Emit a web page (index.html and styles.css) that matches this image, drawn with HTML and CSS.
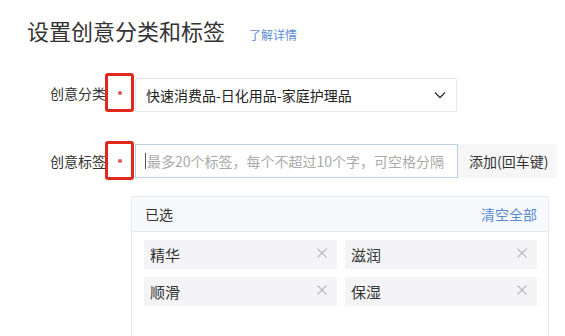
FILE: index.html
```html
<!DOCTYPE html>
<html lang="zh">
<head>
<meta charset="utf-8">
<link rel="stylesheet" href="styles.css">
</head>
<body>
<div class="page">
  <div class="title-row">
    <h1 class="title">设置创意分类和标签</h1>
    <a class="link">了解详情</a>
  </div>
  <div class="form">
    <div class="row row-cat">
      <div class="label">创意分类</div>
      <div class="star"><span class="dot"></span></div>
      <div class="select">
        <span class="select-text">快速消费品-日化用品-家庭护理品</span>
        <svg class="chev" width="12" height="8" viewBox="0 0 12 8"><path d="M1 1.5 L6 6.5 L11 1.5" fill="none" stroke="#333" stroke-width="1.3"/></svg>
      </div>
    </div>
    <div class="row row-tag">
      <div class="label">创意标签</div>
      <div class="star"><span class="dot"></span></div>
      <div class="input"><span class="caret"></span><span class="ph">最多20个标签，每个不超过10个字，可空格分隔</span></div>
      <div class="btn">添加(回车键)</div>
    </div>
    <div class="chosen">
      <div class="chosen-head">
        <span>已选</span>
        <a class="link clear">清空全部</a>
      </div>
      <div class="tags">
        <div class="tag"><span>精华</span><svg class="x" width="10" height="10" viewBox="0 0 10 10"><path d="M0.5 0.5 L9.5 9.5 M9.5 0.5 L0.5 9.5" stroke="#b8b8b8" stroke-width="1.1"/></svg></div>
        <div class="tag"><span>滋润</span><svg class="x" width="10" height="10" viewBox="0 0 10 10"><path d="M0.5 0.5 L9.5 9.5 M9.5 0.5 L0.5 9.5" stroke="#b8b8b8" stroke-width="1.1"/></svg></div>
        <div class="tag"><span>顺滑</span><svg class="x" width="10" height="10" viewBox="0 0 10 10"><path d="M0.5 0.5 L9.5 9.5 M9.5 0.5 L0.5 9.5" stroke="#b8b8b8" stroke-width="1.1"/></svg></div>
        <div class="tag"><span>保湿</span><svg class="x" width="10" height="10" viewBox="0 0 10 10"><path d="M0.5 0.5 L9.5 9.5 M9.5 0.5 L0.5 9.5" stroke="#b8b8b8" stroke-width="1.1"/></svg></div>
      </div>
    </div>
  </div>
</div>
</body>
</html>
```
FILE: styles.css
```css
* { box-sizing: border-box; }
html, body { margin: 0; padding: 0; background: #fff; }
body {
  width: 565px;
  height: 336px;
  overflow: hidden;
  font-family: "Noto Sans CJK SC", "Noto Sans", sans-serif;
  color: #333;
}
.page { padding-left: 27px; }
.title-row {
  display: flex;
  align-items: baseline;
  padding-top: 14px;
  height: 48px;
}
.title {
  margin: 0;
  font-size: 22px;
  font-weight: normal;
  line-height: 32px;
  color: #333;
}
.link {
  color: #5b8bd3;
  font-size: 12px;
  margin-left: 24px;
  cursor: pointer;
}
.form { padding-left: 23px; }
.row {
  display: flex;
  align-items: center;
  font-size: 14px;
}
.row-cat { margin-top: 25px; }
.row-tag { margin-top: 29px; }
.label {
  width: 57px;
  color: #333;
  line-height: 20px;
}
.star {
  width: 29px;
  height: 39px;
  margin-left: -2px;
  border: 3px solid #e0281c;
  border-radius: 3px;
  display: flex;
  align-items: center;
  justify-content: center;
}
.dot {
  width: 4px;
  height: 4px;
  border-radius: 50%;
  background: #e05555;
}
.select {
  margin-left: 1px;
  width: 322px;
  height: 34px;
  border: 1px solid #e4e7ec;
  border-radius: 2px;
  display: flex;
  align-items: center;
  justify-content: space-between;
  padding: 0 10px 0 10px;
  margin-top: 5px;
}
.select-text { color: #222; }
.input {
  margin-left: 1px;
  width: 323px;
  height: 34px;
  border: 1px solid #b7cfe6;
  display: flex;
  align-items: center;
  padding-left: 9px;
}
.caret {
  width: 1px;
  height: 16px;
  background: #555;
  margin-right: 1px;
}
.ph { color: #aaa; white-space: nowrap; }
.btn {
  height: 34px;
  width: 99px;
  background: #f6f6f6;
  display: flex;
  align-items: center;
  padding-left: 11px;
  color: #333;
  white-space: nowrap;
}
.chosen {
  margin-top: 16px;
  margin-left: 81px;
  width: 418px;
  height: 140px;
  border: 1px solid #e6eaef;
  border-bottom: 0;
  border-radius: 2px 2px 0 0;
}
.chosen-head {
  height: 35px;
  background: #f7f9fc;
  border-bottom: 1px solid #e6eaef;
  display: flex;
  align-items: center;
  justify-content: space-between;
  padding: 0 11px 0 13px;
  font-size: 14px;
  color: #333;
}
.clear { margin-left: 0; font-size: 14px; }
.tags {
  display: grid;
  grid-template-columns: 193px 192px;
  column-gap: 8px;
  row-gap: 8px;
  padding: 8px 0 0 12px;
}
.tag {
  height: 29px;
  background: #f4f4f6;
  display: flex;
  align-items: center;
  justify-content: space-between;
  padding: 0 10px 0 6px;
  font-size: 15px;
  color: #333;
}
.x { margin-top: -4px; }
```
